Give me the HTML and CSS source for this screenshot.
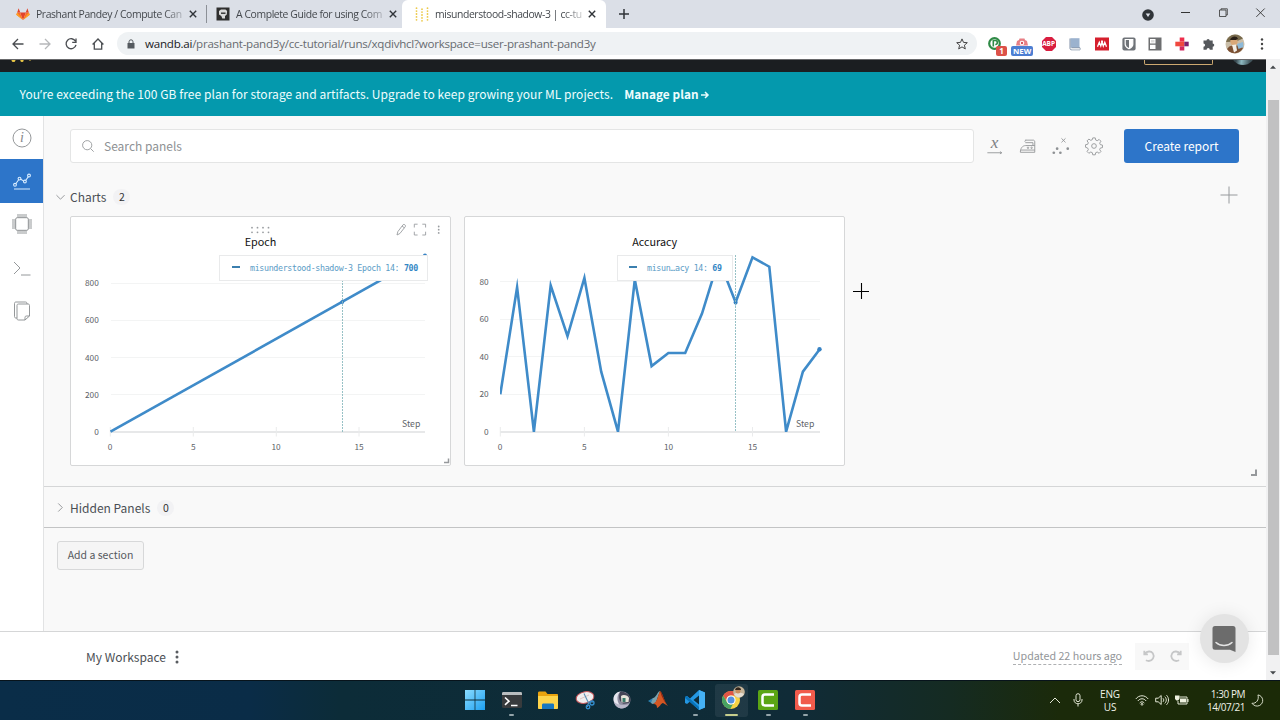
FILE: index.html
```html
<!DOCTYPE html>
<html lang="en">
<head>
  <meta charset="UTF-8">
  <meta name="viewport" content="width=device-width, initial-scale=1.0">
  <title>misunderstood-shadow-3 | cc-tutorial</title>
  <link rel="stylesheet" href="styles.css">
</head>
<body>
  <!-- browser tabs -->
  <div class="tabstrip">
    <div class="tab">
      <svg class="favicon" viewBox="0 0 14 14"><path fill="#e24329" d="M7 13L4 5.500h6z"/><path fill="#fc6d26" d="M7 13L.3 7.800 1.200 5.500H4zM7 13l6.700-5.200-.9-2.300H10z"/><path fill="#e24329" d="M1.200 5.600L2.600 1.200l1.700 4.400zM12.800 5.600L11.400 1.200 9.700 5.600z"/><path fill="#fca326" d="M.3 7.800l.9-2.200L7 13zM13.700 7.800l-.9-2.200L7 13z"/></svg>
      <span class="tab-title">Prashant Pandey / Compute Can</span>
      <svg class="tab-close" viewBox="0 0 8 8"><path d="M.8.8l6.400 6.400M7.200.8L.8 7.200"/></svg>
    </div>
    <div class="tab tab-second">
      <svg class="favicon" viewBox="0 0 14 14"><path fill="#2f2f2f" d="M.5.5h13v13H.5z"/><path fill="#d9d9d9" d="M3 4L5 2.500h4.500l1.600 1.500-.3 3.500-1.800 1.500v2.500H6.300L5.300 9 3 7.500z"/><path fill="#2f2f2f" d="M5 5.500h4.500v1.400H5z"/></svg>
      <span class="tab-title">A Complete Guide for using Com</span>
      <svg class="tab-close" viewBox="0 0 8 8"><path d="M.8.8l6.400 6.400M7.200.8L.8 7.200"/></svg>
    </div>
    <div class="tab tab-active">
      <svg class="favicon" viewBox="0 0 14 14"><g stroke="#ecc94a" stroke-width="1.800" stroke-linecap="round" stroke-dasharray="0 2.900"><path d="M1.500 1.200v12M7 2.200v12M12.500 1.200v12"/></g></svg>
      <span class="tab-title">misunderstood-shadow-3 | cc-tut</span>
      <svg class="tab-close" viewBox="0 0 8 8"><path d="M.8.8l6.400 6.400M7.200.8L.8 7.200"/></svg>
    </div>
    <svg class="new-tab" viewBox="0 0 10 10"><path d="M5 0v10M0 5h10"/></svg>
    <div class="window-buttons">
      <svg width="12" height="12" viewBox="0 0 12 12"><circle cx="6" cy="6" r="5.800" fill="#303439"/><path d="M3.700 4.500h4.600L6 8z" fill="#dbdfe7"/></svg>
      <svg width="9" height="10" viewBox="0 0 9 10"><path d="M0 4.500h9" stroke="#333"/></svg>
      <svg width="9" height="10" viewBox="0 0 9 10"><path d="M.5 2h6.500v6.500H.5zM2 2V.8h6.300V7H7" fill="none" stroke="#333" stroke-width=".8"/></svg>
      <svg width="9" height="10" viewBox="0 0 9 10"><path d="M.3.500l8.400 8.400M8.700.500L.3 8.900" stroke="#333" stroke-width=".9"/></svg>
    </div>
  </div>

  <!-- address bar -->
  <div class="toolbar">
    <div class="nav-icons">
      <svg viewBox="0 0 12 12"><path d="M11.500 6H1M6 1L1 6l5 5"/></svg>
      <svg class="disabled" viewBox="0 0 12 12"><path d="M.5 6H11M6 1l5 5-5 5"/></svg>
      <svg viewBox="0 0 12 12"><path d="M10.500 3.300A5 5 0 1 0 11 6.800M11 .5v3.800H7.200"/></svg>
      <svg viewBox="0 0 12 12"><path d="M.6 6.500L6 1l5.400 5.500M2.300 5.200v6h7.400v-6"/></svg>
    </div>
    <div class="address">
      <svg class="lock" viewBox="0 0 8 10"><path d="M.5 4h7v5.500h-7z" fill="#555a5f"/><path d="M2 4V2.800a2 2 0 0 1 4 0V4" fill="none" stroke="#555a5f"/></svg>
      <span class="url"><b>wandb.ai</b>/prashant-pand3y/cc-tutorial/runs/xqdivhcl?workspace=user-prashant-pand3y</span>
      <svg class="star" viewBox="0 0 12 12"><path d="M6 .9l1.500 3.500 3.800.3-2.900 2.500.9 3.700L6 8.900l-3.300 2 .9-3.700L.7 4.700l3.800-.3z" fill="none" stroke="#444"/></svg>
    </div>
    <div class="extensions">
      <div class="ext"><svg viewBox="0 0 14 14"><circle cx="6.500" cy="6.500" r="5.300" fill="#fff" stroke="#2f8a46" stroke-width="2.200"/><path d="M5.300 9.500v-6h2a2 2 0 0 1 0 4" fill="none" stroke="#2f8a46" stroke-width="1.600"/></svg><span class="ext-badge red">1</span></div>
      <div class="ext"><svg viewBox="0 0 14 14"><path d="M1 8.500L2 4 4 3l.5-1.500h5L10 3l2 1 1 4.500z" fill="#e87f85"/><circle cx="7" cy="6" r="2.300" fill="#fff"/><circle cx="7" cy="6" r="1.200" fill="#d7545c"/></svg><span class="ext-badge blue">NEW</span></div>
      <div class="ext"><svg viewBox="0 0 14 14"><path d="M4 0h6l4 4v6l-4 4H4l-4-4V4z" fill="#d91e40"/></svg><span class="abp">ABP</span></div>
      <div class="ext"><svg viewBox="0 0 14 14"><path d="M2.500 1.200h9v9.500h-9z" fill="#9bb2ce"/><path d="M2 1.500v9.800c0 1 .5 1.500 1.500 1.500H12v-2H3.500" fill="none" stroke="#7e8fa6"/><path d="M4 12h8" stroke="#eee"/></svg></div>
      <div class="ext"><svg viewBox="0 0 14 14"><path d="M0 .5h14v13H0z" fill="#d51f2d"/><path d="M2.500 9.800L4.300 5.300 5.800 9 7 5l1.300 4 1.500-3.700 1.700 4.500" fill="none" stroke="#fff" stroke-width="1.300"/><circle cx="7" cy="4.700" r="1.100" fill="#fff"/></svg></div>
      <div class="ext"><svg viewBox="0 0 14 14"><rect x=".4" y=".4" width="13.200" height="13.200" rx="2" fill="#6f7378"/><path d="M3.200 2.500h7.600v5c0 2-1.800 3.300-3.800 4.300-2-1-3.800-2.300-3.800-4.300z" fill="#6f7378" stroke="#fff" stroke-width="1.200"/><path d="M7 2.500h3.800v5c0 2-1.800 3.300-3.800 4.300z" fill="#fff"/></svg></div>
      <div class="ext"><svg viewBox="0 0 14 14"><path d="M.5.5h13v13H.5z" fill="#6d6e70"/><path d="M2 2h5.500v4.500H2zM2 7.800h5.500v4.200H2z" fill="#fff"/><path d="M3 3h3.500v2.500H3z" fill="#ddd"/></svg></div>
      <div class="ext"><svg viewBox="0 0 14 14"><path d="M4.700.5h4.600v4.200H4.700z" fill="#ee2e4c"/><path d="M.3 4.700h9v4.600h-9z" fill="#f0483e"/><path d="M4.700 9.300h4.600v4.200H4.700z" fill="#d2265f"/><path d="M9.300 4.700h4.400v4.600H9.300z" fill="#7d1f6f"/></svg></div>
      <div class="ext"><svg viewBox="0 0 14 14"><path d="M1.500 3.500h3a1.600 1.600 0 1 1 3.200 0h3v3a1.600 1.600 0 1 1 0 3.200v3H7.800a1.600 1.600 0 1 0-3.200 0H1.500v-3a1.600 1.600 0 1 0 0-3.200z" fill="#55585c"/></svg></div>
      <div class="ext avatar"><svg viewBox="0 0 20 20"><circle cx="10" cy="10" r="9.500" fill="#c9bda8"/><path d="M1 8a9.500 9.500 0 0 1 9-7.500c4 0 6 2 8 4l-7 3z" fill="#786a4c"/><path d="M2 15c2-3 4-4 7-3l6-1 3 3a9.500 9.500 0 0 1-14 3.500z" fill="#7c5133"/><circle cx="9" cy="7.500" r="3.700" fill="#d9a878"/><path d="M5 6c1-4 7-5 8-1l-2 1z" fill="#292018"/><path d="M12 10l6-2 .5 5-5 2z" fill="#8db9d8"/><path d="M7 11l4-.5 1 6-3 2z" fill="#f2eee6"/></svg></div>
      <div class="ext menu-dots"><svg viewBox="0 0 14 14"><circle cx="7" cy="2.500" r="1.200"/><circle cx="7" cy="7" r="1.200"/><circle cx="7" cy="11.500" r="1.200"/></svg></div>
    </div>
  </div>

  <div class="viewport">
    <div class="page">
      <div class="site-header">
        <svg class="site-logo" viewBox="0 0 24 4"><circle cx="4.500" cy=".2" r="1.900"/><circle cx="13" cy=".4" r="1.600"/><circle cx="21" cy="-.9" r="1.400"/></svg>
        <div class="upgrade-button"></div>
        <div class="site-avatar"></div>
      </div>
      <div class="banner"><span class="banner-text">You<span class="apostrophe">’</span>re exceeding the 100 GB free plan for storage and artifacts. Upgrade to keep growing your ML projects.</span><a class="manage-plan">Manage plan</a><svg class="arrow" viewBox="0 0 8 8"><path d="M0 4h7M4 1l3 3-3 3"/></svg></div>

      <div class="main">
        <div class="sidebar">
          <div class="side-item"><svg viewBox="0 0 20 20"><circle cx="10" cy="10" r="9"/><text class="info-i" x="10" y="14.200">i</text></svg></div>
          <div class="side-item selected"><svg viewBox="0 0 20 20"><path d="M2 18h16M3.800 12.700l3-4.200M8.800 8.300l3 1.800M13.800 9.300l2.600-3.700"/><circle cx="3" cy="13.800" r="1.400"/><circle cx="7.500" cy="7.600" r="1.400"/><circle cx="12.900" cy="10.500" r="1.400"/><circle cx="17" cy="4.500" r="1.400"/></svg></div>
          <div class="side-item"><svg viewBox="0 0 20 20"><rect x="3.700" y="3.700" width="12.600" height="12.600" rx="1.500"/><path d="M6 0v3.700M8 0v3.700M10 0v3.700M12 0v3.700M14 0v3.700M6 16.300V20M8 16.300V20M10 16.300V20M12 16.300V20M14 16.300V20M0 6h3.700M0 8h3.700M0 10h3.700M0 12h3.700M0 14h3.700M16.300 6H20M16.300 8H20M16.300 10H20M16.300 12H20M16.300 14H20"/></svg></div>
          <div class="side-item"><svg viewBox="0 0 20 20"><path d="M2 4l6 6-6 6M9 17h9.500"/></svg></div>
          <div class="side-item"><svg viewBox="0 0 20 20"><path d="M6.500 3H16c1 0 1.500.5 1.500 1.500V15l-4.500 4H6.500C5.500 19 5 18.500 5 17.500V4.500C5 3.500 5.500 3 6.500 3M13 19v-2.500c0-1 .5-1.500 1.500-1.500h3M5 17H4c-1 0-1.500-.5-1.500-1.500v-13C2.500 1.500 3 1 4 1h9.500c1 0 1.500.5 1.500 2"/></svg></div>
        </div>

        <div class="content">
          <div class="panel-bar">
            <div class="search">
              <svg viewBox="0 0 12 12"><circle cx="5.200" cy="5.200" r="4.600"/><path d="M8.600 8.600l3.100 3.100"/></svg>
              <span>Search panels</span>
            </div>
            <div class="panel-tools">
              <svg viewBox="0 0 20 20"><text class="x-icon" x="9.500" y="12">x</text><path d="M1.500 17.500h16M15.500 16.200l2 1.300-2 1.300"/></svg>
              <svg viewBox="0 0 20 20"><path d="M7 3.500h9c1 0 1.500 1 1.500 2V17h-16c0-4 2-7.500 6-7.500h10M2 14.500h15.500M6.500 5.300c0-1 .5-1.800 1.500-1.800M7 6.300h8.500v3.200"/><circle cx="10" cy="12" r=".8"/><circle cx="14" cy="12" r=".8"/></svg>
              <svg viewBox="0 0 20 20"><g class="dots"><circle cx="2" cy="17.500" r="1.500"/><circle cx="5.700" cy="13" r="1.500"/><circle cx="9.300" cy="17.500" r="1.500"/><circle cx="17.500" cy="13" r="1.500"/></g><path d="M10.500 1.500l4.500 4.500M15 1.500L10.500 6"/></svg>
              <svg viewBox="0 0 20 20"><circle cx="10" cy="10" r="2.600"/><path d="M8.600 1h2.800l.5 2.400 1.700.7 2.100-1.400 2 2-1.400 2.100.7 1.700 2.400.5v2.800l-2.400.5-.7 1.700 1.400 2.100-2 2-2.100-1.400-1.700.7-.5 2.400H8.600l-.5-2.400-1.700-.7-2.100 1.400-2-2 1.400-2.100-.7-1.700L.6 11.400V8.600L3 8.100l.7-1.700-1.400-2.100 2-2 2.100 1.400 1.700-.7z"/></svg>
            </div>
            <button class="create-report">Create report</button>
          </div>

          <div class="section charts-section">
            <div class="section-title">
              <svg class="chevron" viewBox="0 0 10 10"><path d="M.5 3.500l4.500 4.500 4.500-4.500"/></svg>
              <span>Charts</span><span class="count">2</span>
              <svg class="add-panel" viewBox="0 0 18 18"><path d="M9 .5v17M.5 9h17"/></svg>
            </div>
            <div class="cards">
              <div class="card">
                <svg class="chart" viewBox="70 216 381 250">
                  <g class="grid"><path d="M111 283.500h314M111 320.500h314M111 357.500h314M111 394.500h314"/></g>
                  <path class="axis" d="M110 432h315"/>
                  <path class="axis-ticks" d="M110.300 427v9.500M193.300 427v9.500M276.300 427v9.500M359 427v9.500"/>
                  <g class="tick y"><text x="98.800" y="285.900">800</text><text x="98.800" y="323.300">600</text><text x="98.800" y="360.500">400</text><text x="98.800" y="397.500">200</text><text x="98.800" y="434.600">0</text></g>
                  <g class="tick x"><text x="110" y="450">0</text><text x="193.300" y="450">5</text><text x="276" y="450">10</text><text x="359" y="450">15</text></g>
                  <text class="step" x="420.300" y="427">Step</text>
                  <path class="series" d="M110.500 431.700L425 255.400"/>
                  <circle class="dot" cx="342.300" cy="301.900" r="1.900"/><circle class="dot" cx="425" cy="255.600" r="2"/>
                  <path class="crosshair" d="M342.500 256v176"/>
                  <text class="chart-title" x="260.500" y="246">Epoch</text>
                  <g class="handle"><circle cx="252" cy="227.700" r=".9"/><circle cx="257.500" cy="227.700" r=".9"/><circle cx="263" cy="227.700" r=".9"/><circle cx="268.500" cy="227.700" r=".9"/><circle cx="252" cy="232.300" r=".9"/><circle cx="257.500" cy="232.300" r=".9"/><circle cx="263" cy="232.300" r=".9"/><circle cx="268.500" cy="232.300" r=".9"/><circle cx="438.700" cy="226.500" r=".9"/><circle cx="438.700" cy="229.700" r=".9"/><circle cx="438.700" cy="232.900" r=".9"/></g>
                  <path class="tool" d="M397 235l.8-3.300 5.300-7c1-.9 3 .6 2.300 1.800l-5.500 7zM402 226l2.300 1.800M414.300 227.500v-3.300h3.300M422.300 224.200h3.300v3.300M425.600 231.700v3.300h-3.300M417.600 235h-3.300v-3.300"/>
                  <path class="grip" d="M444 462.500h4.500v-4"/>
                </svg>
                <div class="tip tip-epoch"><i></i><span>misunderstood-shadow-3 Epoch 14: <b>700</b></span></div>
              </div>
              <div class="card">
                <svg class="chart" viewBox="464 216 381 250">
                  <defs><clipPath id="plot"><path d="M500 250h325v182H500z"/></clipPath></defs>
                  <g class="grid"><path d="M500 281.500h320M500 319.500h320M500 356.500h320M500 394.500h320"/></g>
                  <path class="axis" d="M500 432h320"/>
                  <path class="axis-ticks" d="M500.300 427v9.500M584.400 427v9.500M668.400 427v9.500M752.500 427v9.500"/>
                  <g class="tick y"><text x="488.700" y="284.700">80</text><text x="488.700" y="322.300">60</text><text x="488.700" y="359.700">40</text><text x="488.700" y="397.300">20</text><text x="488.700" y="434.600">0</text></g>
                  <g class="tick x"><text x="500" y="450">0</text><text x="584.300" y="450">5</text><text x="668.500" y="450">10</text><text x="752.500" y="450">15</text></g>
                  <text class="step" x="814.300" y="427">Step</text>
                  <path class="series" clip-path="url(#plot)" d="M500.300 394.200L517.100 287.300 533.900 431.700 550.700 285.500 567.500 336.100 584.400 278 601.200 371.700 618 431.700 634.800 279.700 651.600 366.100 668.400 353H685.200L702 313.600 718.800 259.200 735.600 302.300 752.500 257.300 769.300 266.700 786.100 431.700 802.900 371.700 819.700 349.200"/>
                  <circle class="dot" cx="735.600" cy="302.500" r="2"/><circle class="dot" cx="819.500" cy="349.200" r="2.200"/>
                  <path class="crosshair" d="M735.500 255v177"/>
                  <text class="chart-title" x="654.700" y="246">Accuracy</text>
                </svg>
                <div class="tip tip-accuracy"><i></i><span>misun…acy 14: <b>69</b></span></div>
              </div>
            </div>
            <svg class="section-grip" viewBox="0 0 8 8"><path d="M1 6h5V.5"/></svg>
          </div>

          <div class="section hidden-section">
            <div class="section-title">
              <svg class="chevron" viewBox="0 0 10 10"><path d="M2.500.5L7 5 2.500 9.500"/></svg>
              <span>Hidden Panels</span><span class="count">0</span>
            </div>
          </div>
          <button class="add-section">Add a section</button>
        </div>
      </div>

      <div class="footer">
        <span class="workspace">My Workspace</span>
        <svg class="footer-dots" viewBox="0 0 4 14"><circle cx="2" cy="2" r="1.500"/><circle cx="2" cy="7" r="1.500"/><circle cx="2" cy="12" r="1.500"/></svg>
        <span class="updated">Updated 22 hours ago</span>
        <div class="history">
          <svg viewBox="0 0 12 12"><path d="M1.300.8v3.500h3.600M1.800 4C4 .8 8 .8 9.800 3.200c2.300 3.500-.3 7.800-4 7.800-1.200 0-2-.2-2.900-.7"/></svg>
          <svg viewBox="0 0 12 12"><path d="M10.700.8v3.500H7.100M10.200 4C8 .8 4 .8 2.200 3.200-.1 6.700 2.500 11 6.200 11c1.200 0 2-.2 2.900-.7"/></svg>
        </div>
      </div>
      <div class="messenger"><svg viewBox="0 0 24 28"><path d="M3 1h18a2.500 2.500 0 0 1 2.500 2.500V27L18 24.800H3A2.500 2.500 0 0 1 .5 22.300V3.500A2.500 2.500 0 0 1 3 1z" fill="#6c6c6c"/><path d="M4 17.500c4.500 4 11.500 4 16 0" fill="none" stroke="#e3e3e3" stroke-width="1.500" stroke-linecap="round"/></svg></div>
    </div>
    <div class="scrollbar">
      <svg viewBox="0 0 6 4"><path d="M0 3.700L3 .5l3 3.200z"/></svg>
      <div class="thumb"></div>
      <svg viewBox="0 0 6 4"><path d="M0 .3L3 3.500 6 .3z"/></svg>
    </div>
    <svg class="cursor" viewBox="0 0 16 16"><path d="M8.500 0v16M0 8.500h16"/></svg>
  </div>

  <div class="taskbar">
    <div class="apps">
      <div class="app"><svg viewBox="0 0 20 20"><defs><linearGradient id="win" x2="1" y2="1"><stop stop-color="#8adcff"/><stop offset="1" stop-color="#1d9ff0"/></linearGradient></defs><path fill="url(#win)" d="M0 0h9.600v9.600H0zM10.400 0H20v9.600h-9.600zM0 10.400h9.600V20H0zM10.400 10.400H20V20h-9.600z"/></svg></div>
      <div class="app running"><svg viewBox="0 0 20 20"><rect y="2" width="20" height="16" rx="1.500" fill="#383b3d"/><path d="M0 5V3.500C0 2.500.5 2 1.500 2h17c1 0 1.500.5 1.500 1.500V5z" fill="#b9bdbf"/><path d="M3 7.500l4 3.700-4 3.700M9 15.500h6.500" fill="none" stroke="#fff" stroke-width="1.600"/></svg></div>
      <div class="app"><svg viewBox="0 0 20 20"><path d="M0 3c0-1 .5-1.500 1.500-1.500h6L9.500 4H19c.7 0 1 .5 1 1v3H0z" fill="#e9a30e"/><path d="M0 6h20v12c0 .7-.5 1-1 1H1c-.7 0-1-.5-1-1z" fill="#fdd44b"/><path d="M4 19v-4c0-1 .5-1.500 1.500-1.500h9c1 0 1.500.5 1.500 1.500v4z" fill="#1877bf"/></svg></div>
      <div class="app"><svg viewBox="0 0 20 20"><ellipse cx="10" cy="7.500" rx="9" ry="5.700" transform="rotate(-12 10 7.500)" fill="#f1eeee" stroke="#c7575c" stroke-width="1"/><path d="M5 9l9-4" stroke="#d9b9b9" stroke-width=".8"/><path d="M9 3.500l5 10.500M13.500 12H18M13.500 12l-1 5" stroke="#5b8fb5" stroke-width="1.100"/><circle cx="17" cy="13" r="2" fill="none" stroke="#348fd1" stroke-width="1.300"/><circle cx="13" cy="17" r="1.800" fill="none" stroke="#348fd1" stroke-width="1.300"/></svg></div>
      <div class="app"><svg viewBox="0 0 20 20"><circle cx="10" cy="10" r="8.500" fill="#8f8da0"/><path d="M9 1.600c-4 2-5 9-1 14-4-.5-6.500-3-6.500-6.500C1.500 5 5 1.500 9 1.600z" fill="#e6e6ee"/><path d="M8 1.800c6-1 11 4 10.500 9-.5 2-3 3-7 3-4-2-5.500-6-3.500-12z" fill="#464556"/><path d="M9 6c2-2 7-1 8 2l-.5 4-7 .5z" fill="#e8e4d9"/><path d="M10.500 8h3v4h-3z" fill="#397b69"/><path d="M2 12c4 3 10 4 15 2-2 3.500-5 4.500-7.500 4.500S3 16.500 2 12z" fill="#b9b7c9"/></svg></div>
      <div class="app"><svg viewBox="0 0 20 20"><path d="M0 11l5-3 3 3-3 3z" fill="#2b83b5"/><path d="M5 8c3 0 4-6 7-7L8 12l-3 2-2-1z" fill="#7ba2ad"/><path d="M12 1c3 2 4 11 8 15l-5-3c-2 0-3 4-6 5 0-3-1-4-4-4 4-1 5-9 7-13z" fill="#d45723"/><path d="M12 1c3 2 4 11 8 15-3-3-6-8-8-15z" fill="#8b2615"/></svg></div>
      <div class="app running"><svg viewBox="0 0 20 20"><path d="M14 0l6 2.500v15L14 20 5 11.500 2 14 0 13V7l2-1 3 2.500zM14 5.500L8.500 10l5.500 4.500z" fill="#2497e2"/><path d="M14 0l6 2.500v15L14 20z" fill="#45b1f4"/><path d="M0 7l2-1 12 11v3L0 8z" fill="#0874bb"/></svg></div>
      <div class="app current"><svg viewBox="0 0 20 20"><circle cx="9" cy="10" r="9" fill="#f7cf36"/><path d="M1.200 5.500A9 9 0 0 1 16.800 5.500H9a4.500 4.500 0 0 0-3.900 6.700z" fill="#df4a3a"/><path d="M1.200 5.500l3.900 6.700A4.500 4.500 0 0 0 11 14l-2.700 5A9 9 0 0 1 1.200 5.500z" fill="#3a9c58"/><circle cx="9" cy="10" r="4.600" fill="#fff"/><circle cx="9" cy="10" r="3.500" fill="#4a89dc"/></svg><span class="profile"><svg viewBox="0 0 12 12"><circle cx="6" cy="6" r="5.800" fill="#c5b498"/><path d="M1 8c3-2 6-2 10 0-2 4-8 5-10 0z" fill="#e5ded2"/><circle cx="5" cy="5" r="2.500" fill="#c98d5b"/><path d="M2 4c1-4 6-3 6 0z" fill="#33261c"/></svg></span></div>
      <div class="app running"><svg viewBox="0 0 20 20"><rect width="20" height="20" rx="1.500" fill="#5ba514"/><path d="M16 4.500H7C5.500 4.500 4.500 5.500 4.500 7v6c0 1.500 1 2.500 2.500 2.500h9" fill="none" stroke="#fff" stroke-width="2.500"/></svg></div>
      <div class="app running"><svg viewBox="0 0 20 20"><rect width="20" height="20" rx="1.500" fill="#f15b4c"/><path d="M16 4.500H7C5.500 4.500 4.500 5.500 4.500 7v6c0 1.500 1 2.500 2.500 2.500h9" fill="none" stroke="#fff" stroke-width="2.500"/></svg></div>
    </div>
    <div class="tray">
      <svg class="tray-up" viewBox="0 0 12 7"><path d="M1 6l5-5 5 5"/></svg>
      <svg class="tray-mic" viewBox="0 0 10 14"><rect x="3" y=".7" width="4" height="8" rx="2"/><path d="M1 6v1c0 5 8 5 8 0V6M5 11v2.500"/></svg>
      <div class="lang"><span>ENG</span><span>US</span></div>
      <svg class="tray-wifi" viewBox="0 0 14 11"><path d="M.8 4C4-.3 10-.3 13.200 4M2.800 6c2.400-3 6-3 8.400 0M4.700 8c1.400-1.600 3.200-1.600 4.600 0"/><circle cx="7" cy="9.300" r=".9"/></svg>
      <svg class="tray-sound" viewBox="0 0 14 12"><path d="M.7 4.200h2.500l3-2.700v9l-3-2.700H.7zM8 4.300c1 1 1 2.500 0 3.500M9.800 2.700c2 2 2 4.700 0 6.700M11.500 1.200c2.700 2.800 2.700 6.800 0 9.600"/></svg>
      <svg class="tray-battery" viewBox="0 0 14 12"><path d="M4.500 3H12v7H3V7" /><path d="M5 4.500h6v4H5zM12.300 5h1.200v3h-1.200zM0 1.500h4.500v3.500L3 6.500H1.500L0 5z" fill="#eef1df" stroke="none"/></svg>
      <div class="clock"><span>1:30 PM</span><span>14/07/21</span></div>
      <svg class="tray-moon" viewBox="0 0 14 14"><path d="M7.500 1c6 1 7 9 1.500 11.500-3 1.200-6 .2-8-2.500 4.500.5 8-3.500 6.500-9z"/></svg>
    </div>
  </div>
</body>
</html>
```

FILE: styles.css
```css
* {
  box-sizing: border-box;
}
body {
  margin: 0;
  width: 1280px;
  height: 720px;
  overflow: hidden;
  display: flex;
  flex-direction: column;
  font-family: "Noto Sans CJK SC", "Open Sans", sans-serif;
  font-size: 12px;
  color: #4b4f55;
  background-color: #fff;
}
svg {
  display: block;
  flex: none;
  overflow: visible;
}
span, a {
  white-space: nowrap;
}

/* browser */
.tabstrip {
  height: 28px;
  flex: none;
  display: flex;
  background-color: #dbdfe7;
}
.tab {
  display: flex;
  align-items: center;
  width: 206px;
  height: 28px;
  padding-left: 16px;
  font-family: "Open Sans", sans-serif;
  font-size: 10.4px;
  letter-spacing: -0.4px;
  color: #44484d;
}
.tab-second {
  width: 196px;
  padding-left: 9px;
  border-left: 1px solid #a0a4ab;
  border-image: linear-gradient(transparent 6px, #8c9097 6px, #8c9097 22px, transparent 22px) 1;
}
.tab-active {
  width: 204px;
  padding-left: 13px;
  background-color: #fff;
  border-radius: 6px 6px 0 0;
}
.favicon {
  width: 14px;
  height: 14px;
}
.tab-title {
  width: 147px;
  margin-left: 6px;
  -webkit-mask-image: linear-gradient(90deg, #000 128px, transparent 154px);
  mask-image: linear-gradient(90deg, #000 128px, transparent 154px);
}
.tab-close {
  width: 8px;
  height: 8px;
  margin-left: 6px;
  stroke: #303439;
  stroke-width: 1.4;
}
.new-tab {
  width: 10px;
  height: 10px;
  margin: 9px 0 0 12.5px;
  stroke: #303439;
  stroke-width: 1.5;
}
.window-buttons {
  margin-left: auto;
  display: flex;
  align-items: center;
  gap: 28.5px;
  padding: 0 15px 3px 0;
}
.window-buttons svg:first-child {
  margin: 4px -1.5px 0 0;
}
.toolbar {
  height: 31px;
  flex: none;
  display: flex;
  align-items: center;
  background-color: #fff;
}
.nav-icons {
  display: flex;
  gap: 14.7px;
  padding-left: 12px;
}
.nav-icons svg {
  width: 12px;
  height: 12px;
  fill: none;
  stroke: #4a4d51;
  stroke-width: 1.3;
}
.nav-icons .disabled {
  stroke: #b6b8ba;
}
.address {
  width: 860px;
  height: 23px;
  margin-left: 13px;
  display: flex;
  align-items: center;
  border-radius: 12px;
  background-color: #eff2f4;
  font-family: "Open Sans", sans-serif;
  font-size: 11.6px;
  letter-spacing: -0.26px;
  color: #676b70;
}
.lock {
  width: 8px;
  height: 10px;
  margin-left: 10px;
}
.url {
  margin-left: 10px;
}
.url b {
  font-weight: 400;
  color: #202124;
}
.star {
  width: 12px;
  height: 12px;
  margin: 0 9px 0 auto;
}
.extensions {
  display: flex;
  gap: 12.7px;
  margin-left: 11.2px;
}
.ext {
  position: relative;
  width: 14px;
  height: 14px;
}
.avatar svg {
  width: 20px;
  height: 20px;
  margin: -3px;
}
.menu-dots {
  fill: #444;
}
.ext-badge {
  position: absolute;
  top: 9px;
  left: 8px;
  height: 10px;
  padding: 0 3px;
  border-radius: 2px;
  font: bold 8px/10px "Open Sans", sans-serif;
  color: #fff;
}
.red {
  background-color: #dc5148;
}
.blue {
  left: -4px;
  padding: 0 2px;
  background-color: #4c7ed2;
  font-size: 7.8px;
}
.abp {
  position: absolute;
  top: 0;
  left: 0.5px;
  font: bold 6.5px/14px "Open Sans", sans-serif;
  color: #fff;
}

/* page frame */
.viewport {
  position: relative;
  height: 621px;
  flex: none;
  display: flex;
}
.page {
  position: relative;
  width: 1266px;
  display: flex;
  flex-direction: column;
}
.site-header {
  height: 13px;
  flex: none;
  display: flex;
  align-items: flex-start;
  background-color: #1b1e21;
  border-top: 1px solid #68696b;
  overflow: hidden;
}
.site-logo {
  width: 24px;
  height: 4px;
  margin-left: 9px;
  fill: #eac846;
}
.upgrade-button {
  width: 69px;
  height: 5px;
  margin-left: auto;
  border: 1px solid #cda971;
  border-top: none;
  border-radius: 0 0 2px 2px;
}
.site-avatar {
  width: 24px;
  height: 24px;
  margin: -19px 11px 0 18px;
  border-radius: 50%;
  background: linear-gradient(100deg, #394950 30%, #8db8c0 50%, #42555c 80%);
}
.banner {
  height: 44px;
  flex: none;
  display: flex;
  align-items: center;
  padding: 0 0 0 19.5px;
  background-color: #0499ad;
  color: #effdfd;
  line-height: 20px;
  letter-spacing: 0.065px;
}
.apostrophe {
  font-family: "Open Sans", sans-serif;
  line-height: 1;
}
.manage-plan {
  margin-left: 11px;
  font-weight: 700;
  font-size: 11.8px;
}
.arrow {
  width: 8px;
  height: 8px;
  margin: 2px 0 0 2.5px;
  fill: none;
  stroke: #e6fbfc;
  stroke-width: 1.5;
}
.main {
  height: 515px;
  flex: none;
  display: flex;
}
.sidebar {
  width: 43px;
  flex: none;
  background-color: #fff;
}
.side-item {
  width: 43px;
  height: 43.4px;
  display: flex;
  align-items: center;
  justify-content: center;
}
.side-item svg {
  width: 20px;
  height: 20px;
  fill: none;
  stroke: #898c8f;
  stroke-width: 0.9;
}
.side-item .info-i {
  font: italic 14px "Liberation Serif", serif;
  text-anchor: middle;
  fill: #85888b;
  stroke: none;
}
.side-item.selected {
  background-color: #2d75c9;
}
.side-item.selected svg {
  stroke: #d9edff;
  stroke-width: 1.1;
}
.content {
  width: 1223px;
  border-left: 1px solid #e2e3e4;
  background-color: #f9f9f9;
}
.panel-bar {
  height: 60px;
  padding: 0 27px 0 26px;
  display: flex;
  align-items: center;
}
.search {
  width: 904px;
  height: 34px;
  display: flex;
  align-items: center;
  padding: 0 0 1px 12px;
  border: 1px solid #e4e5e5;
  border-radius: 3px;
  background-color: #fff;
  color: #8e9194;
}
.search span {
  margin-top: -1px;
}
.search svg {
  width: 12px;
  height: 12px;
  margin-right: 10px;
  margin-left: -1px;
  fill: none;
  stroke: #95989b;
  stroke-width: 0.9;
}
.panel-tools {
  display: flex;
  gap: 15.3px;
  margin-left: 11.5px;
}
.panel-tools svg {
  width: 18px;
  height: 18px;
  fill: none;
  stroke: #949699;
}
.panel-tools .x-icon {
  font: italic 19px "Liberation Serif", serif;
  text-anchor: middle;
  fill: #7d8083;
  stroke: none;
}
.panel-tools .dots {
  fill: #8e9194;
  stroke: none;
}
button {
  font-family: inherit;
  border-radius: 3px;
}
.create-report {
  width: 115px;
  height: 34px;
  margin-left: auto;
  padding: 0 0 2px;
  border: none;
  background-color: #2d75c9;
  color: #fff;
  font-size: 12px;
}

/* sections */
.section {
  position: relative;
  border-bottom: 1px solid #d5d6d7;
}
.charts-section {
  height: 311px;
}
.section-title {
  display: flex;
  align-items: center;
  height: 40px;
  padding-left: 12px;
}
.chevron {
  width: 9px;
  height: 9px;
  margin-right: 5px;
  fill: none;
  stroke: #8d9093;
}
.count {
  min-width: 17px;
  height: 16px;
  margin: 2px 0 0 7px;
  border-radius: 8px;
  background-color: #f2f2f4;
  color: #333;
  font-size: 10.5px;
  line-height: 16px;
  text-align: center;
}
.add-panel {
  width: 18px;
  height: 18px;
  margin: -3px 28px 0 auto;
  stroke: #96999c;
}
.cards {
  display: flex;
  gap: 13px;
  padding-left: 26px;
}
.card {
  position: relative;
  width: 381px;
  height: 250px;
  border: 1px solid #d6d7d8;
  border-radius: 2px;
  background-color: #fff;
}
.chart {
  width: 381px;
  height: 250px;
  margin: -1px;
}
.grid path {
  stroke: #f3f4f4;
}
.axis {
  stroke: #dfe1e2;
  stroke-width: 1.5;
}
.axis-ticks {
  stroke: #eaebec;
}
.tick, .step {
  font-size: 8.3px;
  fill: #606368;
}
.step {
  font-size: 8.7px;
}
.tick.y, .step {
  text-anchor: end;
}
.tick.x, .chart-title {
  text-anchor: middle;
}
.chart-title {
  font-size: 10.8px;
  fill: #111;
}
.series {
  fill: none;
  stroke: #3f8bc9;
  stroke-width: 2.6;
  stroke-miterlimit: 10;
}
.dot {
  fill: #3682c4;
}
.crosshair {
  stroke: #8bbac0;
  stroke-width: 0.9;
  stroke-dasharray: 2 1;
}
.handle {
  fill: #999ca0;
}
.tool {
  fill: none;
  stroke: #9a9da0;
  stroke-width: 0.9;
}
.grip, .section-grip {
  fill: none;
  stroke: #96999c;
  stroke-width: 1.5;
}
.tip {
  position: absolute;
  top: 38px;
  height: 26px;
  display: flex;
  align-items: center;
  border: 1px solid #e9eaeb;
  background-color: #fff;
  font: 8.3px "DejaVu Sans Mono", monospace;
  letter-spacing: -0.33px;
  color: #5b9cc6;
}
.tip i {
  width: 8px;
  height: 1.5px;
  margin: 0 10px 2px 12px;
  background-color: #3b7fae;
}
.tip b {
  color: #3487c5;
}
.tip-epoch {
  left: 148px;
  width: 209px;
}
.tip-accuracy {
  left: 152px;
  width: 116px;
}
.tip-accuracy i {
  margin-left: 11px;
}
.section-grip {
  position: absolute;
  right: 8px;
  bottom: 9px;
  width: 8px;
  height: 8px;
  stroke-width: 2;
}
.hidden-section {
  height: 41px;
  border-bottom: 1px solid #c3c4c5;
}
.hidden-section .section-title {
  height: 40px;
}
.add-section {
  width: 87px;
  height: 29px;
  margin: 13px 0 0 13px;
  padding: 0 0 3px;
  border: 1px solid #d7d8d9;
  background-color: #f5f5f5;
  color: #55595e;
  font-size: 10.5px;
}
.footer {
  height: 49px;
  flex: none;
  display: flex;
  align-items: center;
  padding: 1px 77px 0 86px;
  border-top: 1px solid #d5d6d7;
  background-color: #fff;
}
.footer-dots {
  width: 4px;
  height: 14px;
  margin-left: 9px;
  fill: #595c60;
}
.updated {
  margin: -1px 0 0 auto;
  font-size: 10.7px;
  line-height: 16px;
  color: #929598;
  border-bottom: 1px dashed #aeb0b2;
}
.history {
  width: 54px;
  height: 27px;
  margin-left: 13px;
  display: flex;
  align-items: center;
  justify-content: space-around;
  background-color: #f8f8f8;
}
.history svg {
  width: 12px;
  height: 12px;
  margin-top: -2px;
  fill: none;
  stroke: #c6c7c8;
  stroke-width: 1.8;
}
.messenger {
  position: absolute;
  right: 17.5px;
  bottom: 17px;
  width: 49px;
  height: 49px;
  display: flex;
  align-items: center;
  justify-content: center;
  border-radius: 50%;
  background-color: #e3e3e3;
  box-shadow: 0 1px 18px rgba(0, 0, 0, 0.09);
}
.messenger svg {
  width: 24px;
  height: 28px;
}
.scrollbar {
  width: 14px;
  display: flex;
  flex-direction: column;
  align-items: center;
  padding: 6px 0 5px 0;
  background-color: #f1f1f2;
}
.scrollbar svg {
  width: 6px;
  height: 4px;
  fill: #45484b;
}
.thumb {
  width: 11px;
  height: 555px;
  margin: 31px 0 auto 0;
  background-color: #c1c1c2;
}
.cursor {
  position: absolute;
  top: 224px;
  left: 853px;
  width: 16px;
  height: 16px;
  stroke: #000;
  stroke-width: 1.1;
}

/* taskbar */
.taskbar {
  height: 40px;
  flex: none;
  display: flex;
  align-items: center;
  padding-left: 456.5px;
  border-top: 1px solid #07131b;
  background: linear-gradient(90deg, #0a2d48 0, #0a2c47 250px, #0c2c38 340px, #102b37 800px, #152b22 950px, #1b2a0a 1060px, #1b2a07 100%);
}
.apps {
  display: flex;
}
.app {
  position: relative;
  width: 36.7px;
  height: 39px;
  display: flex;
  align-items: center;
  justify-content: center;
  padding-bottom: 1px;
}
.app svg {
  width: 20px;
  height: 20px;
}
.running::after, .current::after {
  content: "";
  position: absolute;
  left: 16px;
  bottom: 4px;
  width: 5px;
  height: 2px;
  border-radius: 1px;
  background-color: #94a4aa;
}
.current::before {
  content: "";
  position: absolute;
  inset: 3px 2px;
  border-radius: 3px;
  background-color: rgba(255, 255, 255, 0.07);
}
.current::after {
  left: 12px;
  width: 13px;
  background-color: #c6ce8d;
}
.profile {
  position: absolute;
  top: 5px;
  right: 5px;
}
.profile svg {
  width: 12px;
  height: 12px;
}
.tray {
  margin-left: auto;
  display: flex;
  align-items: center;
  padding: 0 16px 0 0;
  color: #f0f2e8;
  font-family: "Open Sans", sans-serif;
  font-size: 10px;
  line-height: 13px;
}
.tray svg {
  margin-top: -1px;
  fill: none;
  stroke: #e2e6d4;
}
.tray-up {
  width: 12px;
  height: 7px;
}
.tray-mic {
  width: 10px;
  height: 14px;
  margin-left: 12px;
}
.lang, .clock {
  display: flex;
  flex-direction: column;
  align-items: center;
}
.lang {
  width: 22px;
  margin-left: 16px;
  letter-spacing: -0.2px;
}
.tray-wifi {
  width: 14px;
  height: 11px;
  margin-left: 14px;
}
.tray-sound {
  width: 14px;
  height: 12px;
  margin-left: 6px;
}
.tray-battery {
  width: 14px;
  height: 12px;
  margin-left: 6px;
}
.clock {
  width: 40px;
  margin-left: 16px;
  align-items: flex-end;
  letter-spacing: -0.45px;
}
.tray-moon {
  width: 13px;
  height: 13px;
  margin-left: 6px;
}
```
